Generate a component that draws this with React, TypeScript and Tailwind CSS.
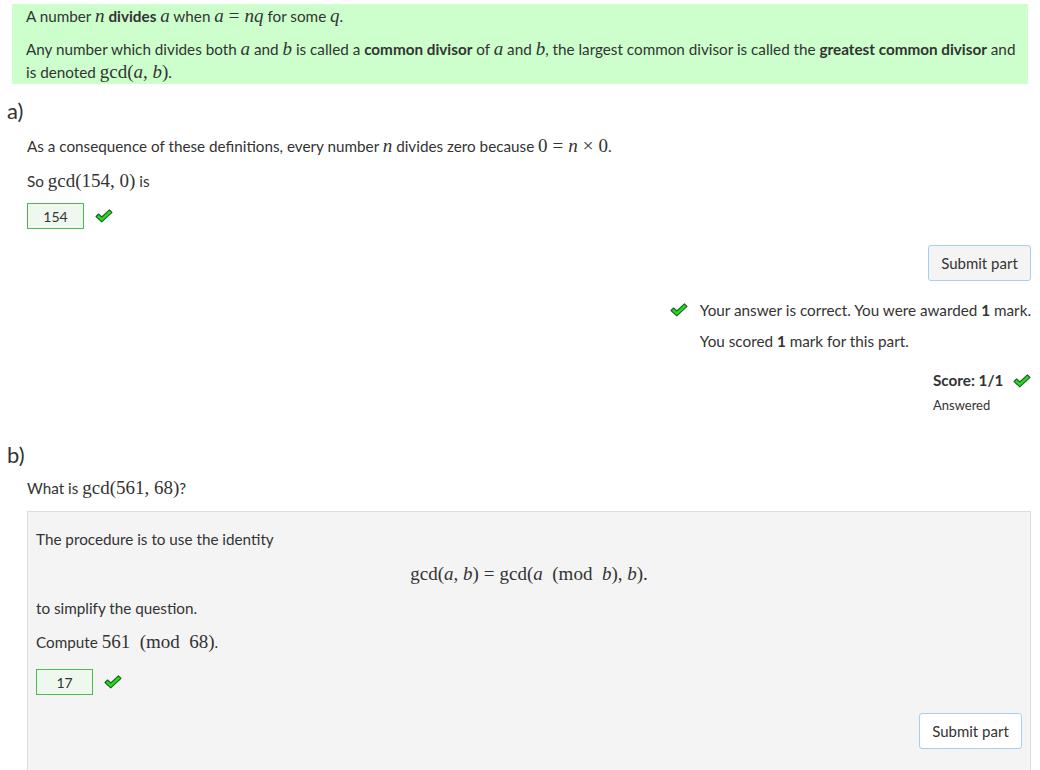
import React from "react";

const Check = ({ className = "" }: { className?: string }) => (
  <svg viewBox="0 0 18 14" width="18" height="14" className={className}>
    <path
      d="M1 7.5 L3.6 5 L6.8 8 L14.4 0.8 L17 3.3 L6.8 12.9 Z"
      fill="#22dd22"
      stroke="#1f5f1f"
      strokeWidth="1.1"
      strokeLinejoin="round"
    />
  </svg>
);

// inline maths in a serif face
const M = ({ children }: { children: React.ReactNode }) => (
  <span className="font-['Liberation_Serif',serif] text-[19px] leading-none">{children}</span>
);
const V = ({ children }: { children: React.ReactNode }) => (
  <span className="font-['Liberation_Serif',serif] text-[19px] italic leading-none">{children}</span>
);
// operator with thick spacing
const Op = ({ children }: { children: React.ReactNode }) => <span className="mx-[5px]">{children}</span>;

const SubmitButton = ({ white = false }: { white?: boolean }) => (
  <button
    className={`h-[36px] w-[103px] rounded-[3px] border border-[#a6d0ee] text-[15px] text-[#333] ${
      white ? "bg-white" : "bg-[#f4f4f4]"
    }`}
  >
    Submit part
  </button>
);

const AnswerBox = ({ value }: { value: string }) => (
  <div className="flex items-center gap-[11px]">
    <div className="flex h-[26px] w-[57px] items-center justify-center border border-[#4cbb4c] bg-[#eff8ef] text-[14px]">
      {value}
    </div>
    <Check />
  </div>
);

export default function App() {
  return (
    <div className="min-h-[770px] overflow-hidden bg-white font-['Lato','Open_Sans',sans-serif] text-[15.25px] leading-[23px] text-[#333]">
      {/* definitions */}
      <div className="mx-[12px] mt-[4px] bg-[#ccffcc] pl-[14px] pr-[4px] pt-[1px]">
        <p>
          A number <V>n</V> <b>divides</b> <V>a</V> when{" "}
          <M>
            <i>a</i>
            <Op>=</Op>
            <i>nq</i>
          </M>{" "}
          for some <V>q</V>.
        </p>
        <p className="mt-[10px]">
          Any number which divides both <V>a</V> and <V>b</V> is called a <b>common divisor</b> of <V>a</V> and{" "}
          <V>b</V>, the largest common divisor is called the <b>greatest common divisor</b> and is denoted{" "}
          <M>
            gcd(<i>a</i>, <i>b</i>)
          </M>
          .
        </p>
      </div>

      {/* part a */}
      <div className="mt-[14px] pl-[7px] text-[22px] leading-[26px]">a)</div>
      <div className="pl-[27px] pr-[9px]">
        <p className="mt-[11px]">
          As a consequence of these definitions, every number <V>n</V> divides zero because{" "}
          <M>
            0<Op>=</Op>
            <i>n</i>
            <Op>×</Op>0
          </M>
          .
        </p>
        <p className="mt-[12px]">
          So <M>gcd(154, 0)</M> is
        </p>
        <div className="mt-[10px]">
          <AnswerBox value="154" />
        </div>
        <div className="mt-[16px] flex justify-end">
          <SubmitButton />
        </div>
        <div className="mt-[18px] flex justify-end">
          <div className="flex items-start gap-[12px]">
            <Check className="mt-[4px]" />
            <div>
              <p>
                Your answer is correct. You were awarded <b>1</b> mark.
              </p>
              <p className="mt-[8px]">
                You scored <b>1</b> mark for this part.
              </p>
            </div>
          </div>
        </div>
        <div className="mt-[16px] flex justify-end">
          <div className="w-[98px]">
            <div className="flex items-center justify-between">
              <b>Score: 1/1</b>
              <Check />
            </div>
            <div className="mt-[4px] text-[13px] leading-[18px]">Answered</div>
          </div>
        </div>
      </div>

      {/* part b */}
      <div className="mt-[28px] pl-[7px] text-[22px] leading-[26px]">b)</div>
      <div className="pl-[27px] pr-[9px]">
        <p className="mt-[9px]">
          What is <M>gcd(561, 68)</M>?
        </p>
        <div className="mt-[11px] border border-[#dddddd] bg-[#f4f4f4] px-[8px] pb-[40px] pt-[16px]">
          <p>The procedure is to use the identity</p>
          <p className="mt-[10px] text-center leading-[27px]">
            <M>
              gcd(<i>a</i>, <i>b</i>)<Op>=</Op>gcd(<i>a</i>&nbsp;&nbsp;(mod&nbsp;&nbsp;<i>b</i>), <i>b</i>).
            </M>
          </p>
          <p className="mt-[9px]">to simplify the question.</p>
          <p className="mt-[11px]">
            Compute <M>561&nbsp;&nbsp;(mod&nbsp;&nbsp;68)</M>.
          </p>
          <div className="mt-[15px]">
            <AnswerBox value="17" />
          </div>
          <div className="mt-[18px] flex justify-end">
            <SubmitButton white />
          </div>
        </div>
      </div>
    </div>
  );
}
